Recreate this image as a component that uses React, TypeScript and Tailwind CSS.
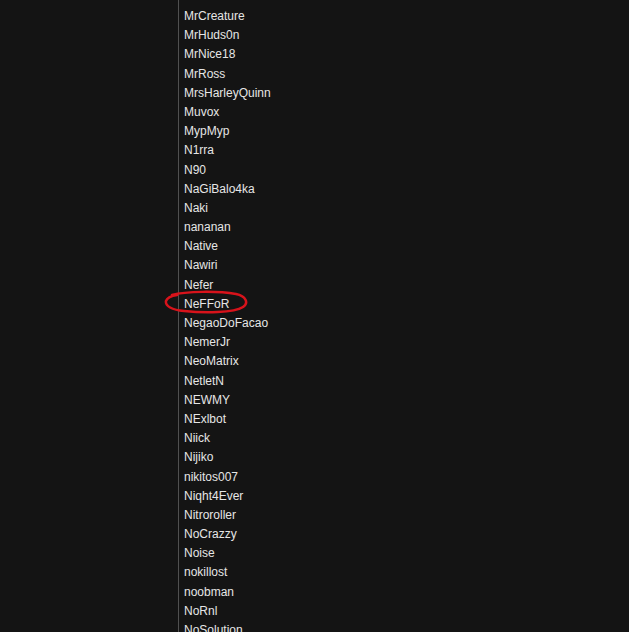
import React from "react";

const names = [
  "MrCreature","MrHuds0n","MrNice18","MrRoss","MrsHarleyQuinn","Muvox","MypMyp","N1rra","N90","NaGiBalo4ka","Naki","nananan","Native","Nawiri","Nefer","NeFFoR","NegaoDoFacao","NemerJr","NeoMatrix","NetletN","NEWMY","NExlbot","Niick","Nijiko","nikitos007","Niqht4Ever","Nitroroller","NoCrazzy","Noise","nokillost","noobman","NoRnl","NoSolution",
];

export default function App() {
  return (
    <div className="w-[629px] h-[632px] overflow-hidden bg-[#141414] flex" style={{ fontFamily: '"Liberation Sans", Arial, sans-serif' }}>
      <div className="w-[178px] shrink-0" />
      <div className="relative border-l border-[#505050] pl-[5px] pt-[7px] flex-1">
        {names.map((n) => (
          <div key={n} className="relative text-[12px] leading-[19.19px] text-[#e6e6e6] whitespace-nowrap">
            {n}
            {n === "NeFFoR" && (
              <svg className="absolute left-[-20px] top-[-5px]" width="90" height="28" viewBox="0 0 90 28">
                <path d="M8 5 C 22 1, 55 1, 72 4 C 82 6, 85 13, 79 17 C 70 23, 40 23, 20 21 C 8 20, 1 16, 2 11 C 3 8, 7 6, 13 5" fill="none" stroke="#d8131b" strokeWidth="2.5" strokeLinecap="round" />
              </svg>
            )}
          </div>
        ))}
      </div>
    </div>
  );
}
